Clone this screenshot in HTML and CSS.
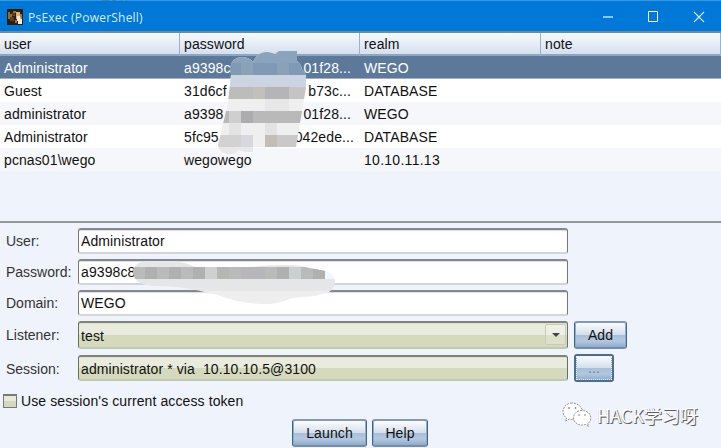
FILE: index.html
```html
<!DOCTYPE html>
<html lang="en"><head><meta charset="utf-8"><title>PsExec (PowerShell)</title>
<link rel="stylesheet" href="styles.css"></head>
<body>
<div class="window">
  <header class="titlebar">
    <svg class="app-icon" width="16" height="16" viewBox="0 0 16 16" shape-rendering="crispEdges"><path fill="#2a1d12" d="M0 0h16v16H0z"/><path fill="#9a6a25" d="M1 3h2v2h2v3H3v2H1zM6 2h3v2H6z"/><path fill="#5a421c" d="M3 8h4v4H3zM5 4h3v3H5z"/><path fill="#d9b36e" d="M9 3h4v2h2v5H9z"/><path fill="#f1ece3" d="M10 7h3v3h2v5h-4v-3h-1z"/><path fill="#c06a2c" d="M13 5h2v5h-1V8h-1zM8 11h2v3H8z"/></svg>
    <span class="title">PsExec (PowerShell)</span>
    <svg class="controls" width="106" height="12" viewBox="0 0 106 12" fill="none"><path d="M0 6h10" stroke="#8ec5f3" stroke-width="2"/><path d="M45.500.5h9v10h-9z" stroke="#fff"/><path d="M91 1l10 10M101 1L91 11" stroke="#d7ebfc" stroke-width="1.1"/></svg>
  </header>
  <main class="table">
    <div class="row head"><span>user</span><span>password</span><span>realm</span><span>note</span></div>
    <div class="row selected"><span>Administrator</span><span class="hash"><i>a9398c</i><i>01f28...</i></span><span>WEGO</span><span></span></div>
    <div class="row"><span>Guest</span><span class="hash"><i>31d6cf</i><i>b73c...</i></span><span>DATABASE</span><span></span></div>
    <div class="row alt"><span>administrator</span><span class="hash"><i>a9398</i><i>01f28...</i></span><span>WEGO</span><span></span></div>
    <div class="row"><span>Administrator</span><span class="hash wide"><i>5fc95</i><i>042ede...</i></span><span>DATABASE</span><span></span></div>
    <div class="row alt"><span>pcnas01\wego</span><span>wegowego</span><span class="number">10.10.11.13</span><span></span></div>
    <svg class="smudge-table" width="92" height="106" viewBox="216 50 92 106">
      <defs><clipPath id="a"><path d="M230 68q2-11 12-11 7 0 11 5 5-11 15-10l8 2v-1l3-2h18v10q4 3 5 8l4 6v12l-4 24-6 36h-43v5h-8l-6-2q-4 5-12 4-8-2-9-9l10-42 3-28z"/></clipPath></defs>
      <g clip-path="url(#a)" shape-rendering="crispEdges"><path fill="#efeff0" d="M216 50h92v106h-92z"/><path fill="#8ba4bd" d="M216 50h92v13h-92z"/><path fill="#8099b4" d="M216 63h92v12h-92z"/><path fill="#8aa1b8" d="M241 63h12v12h-12zM277 63h12v12h-12z"/><path fill="#cbd5e1" d="M216 75h92v12h-92z"/><path fill="#bcbcba" d="M216 87h37v12h-37z"/><path fill="#c3bfba" d="M253 87h12v12h-12z"/><path fill="#b5b4b6" d="M265 87h24v12h-24z"/><path fill="#c5c3c3" d="M289 87h19v12h-19z"/><path fill="#e7e7e8" d="M265 99h24v12h-24z"/><path fill="#b9b9ba" d="M216 111h92v12h-92z"/><path fill="#d0cfd0" d="M229 111h12v12h-12z"/><path fill="#acabad" d="M241 111h12v12h-12z"/><path fill="#e3e3e4" d="M229 123h12v12h-12zM265 123h12v12h-12z"/><path fill="#d3d2d2" d="M216 135h25v12h-25z"/><path fill="#d5d8df" d="M241 135h12v12h-12z"/><path fill="#c3bdb8" d="M265 135h12v12h-12z"/><path fill="#cac8c8" d="M277 135h31v12h-31z"/><path fill="#e8e8e9" d="M216 147h37v9h-37z"/></g></svg>
  </main>
  <form class="form">
    <div class="line"><label>User:</label><div class="field">Administrator</div></div>
    <div class="line"><label>Password:</label><div class="field">a9398c8</div></div>
    <div class="line"><label>Domain:</label><div class="field">WEGO</div></div>
    <div class="line tall"><label>Listener:</label><div class="field green combo">test<span class="drop"><svg width="8" height="4"><path d="M0 0h8L4 4z" fill="#44473f"/></svg></span></div><button type="button" class="add">Add</button></div>
    <div class="line session"><label>Session:</label><div class="field green">administrator * via&nbsp; 10.10.10.5@3100</div><button type="button" class="more"><span>...</span></button></div>
    <div class="check"><span class="box"></span>Use session's current access token</div>
    <div class="actions"><button type="button" class="launch">Launch</button><button type="button" class="help">Help</button></div>
    <svg class="smudge-field" width="206" height="44" viewBox="132 260 206 44"><defs><clipPath id="b"><path d="M133 270q2-8 14-9h26q12 1 22 6l58 0q14-2 30-2 18 0 26 3l16 3q8 3 10 9 0 8-6 12l-14 4-22 2q-15 6-26 6-28 0-49-9l-22-5q-18-4-40-4-20-1-22-10-1-3-1-6z"/></clipPath></defs><g clip-path="url(#b)" shape-rendering="crispEdges"><path fill="#e5e6e8" d="M132 260h206v31H132z"/><path fill="#f0f7ff" d="M325 265h13v14h-13z"/><path fill="#eeeeef" d="M132 291h206v13H132z"/><path fill="#bababa" d="M132 267h193v12H132z"/><path fill="#b1b0b1" d="M145 267h12v12h-12zM169 267h12v12h-12zM193 267h12v12h-12zM277 267h12v12h-12zM313 267h12v12h-12z"/><path fill="#d0d0d1" d="M205 267h12v12h-12z"/><path fill="#b6b7b2" d="M217 267h12v12h-12z"/><path fill="#b9b6bb" d="M241 267h24v12h-24z"/><path fill="#cad0d2" d="M289 267h12v12h-12z"/></g></svg>
  </form>
  <div class="watermark"><svg width="30" height="26" viewBox="0 0 30 26"><g fill="#fff" stroke="#777" stroke-width=".8" stroke-dasharray="2 1"><path d="M10 1C5 1 1 5 1 9.500c0 3 1.500 5 3.500 6.500L3.500 19l4-2c6 2 13-1 13-7.500C20.500 5 15 1 10 1z"/><path d="M20 8.500c-5 0-8.500 3-8.500 7.500 0 5 6 8.500 12 6.500l3 2-.7-3c2-1.400 3-3.200 3-5.500 0-4.500-4-7.500-8.800-7.500z"/></g><g fill="#555"><circle cx="7" cy="6" r=".8"/><circle cx="13.500" cy="6" r=".8"/><circle cx="17" cy="13" r=".7"/><circle cx="23" cy="13" r=".7"/></g></svg><span>HACK学习呀</span></div>
</div>
</body></html>
```
FILE: styles.css
```css
* { box-sizing: border-box; }
body { margin: 0; }
.window { position: relative; width: 721px; height: 448px; overflow: hidden; background: #eff3fb; font: 14px/20px "Liberation Sans", Arial, sans-serif; letter-spacing: .1px; color: #111; }
.titlebar { height: 33px; display: flex; align-items: center; padding: 1px 16px 0 7px; background: linear-gradient(90deg, transparent 102px, #27405c 102px 109px, transparent 109px 112px, #27405c 112px 116px, transparent 116px 121px, #27405c 121px 122px, transparent 122px 126px, #27405c 126px 127px, transparent 127px) 0 0 / 100% 1px no-repeat border-box, #0078d7; border-top: 1px solid #72b7e980; border-bottom: 2px solid #6e8ba6; color: #d9edfc; }
.title { margin-left: 5px; padding-top: 2px; font: 12px/18px "Open Sans", "Noto Sans", sans-serif; letter-spacing: .22px; flex: 1; }
.controls { margin-right: -4px; }
.table { position: relative; height: 190px; border-bottom: 2px solid #94979c; }
.row { display: grid; grid-template-columns: 180px 180px 181px 180px; height: 23px; line-height: 25px; background: #fff; }
.row > span { padding-left: 4px; white-space: pre; }
.head { background: linear-gradient(#f7fafd, #d5e0ed); border-bottom: 2px solid #8ba7c1; line-height: 23px; }
.head > span { border-right: 1px solid #98b3ce; }
.selected { background: #5d7999; color: #fff; border-bottom: 1px solid #9db0c4; }
.alt { background: #f6f7fa; }
.row > .hash { display: flex; justify-content: space-between; padding-right: 9px; }
.row > .wide { padding-right: 6px; }
.row > .number { letter-spacing: .28px; }
.hash i { font-style: normal; }
.smudge-table { position: absolute; left: 216px; top: 17px; }
.form { position: relative; padding-top: 5px; }
.line { display: flex; height: 26px; margin-bottom: 5px; }
.line label { width: 72px; margin-left: 6px; line-height: 27px; letter-spacing: 0; color: #333; }
.field { width: 490px; height: 26px; padding-left: 2px; line-height: 23px; background: #fff; border: 1px solid #777; border-top: 2px solid #85878c; border-bottom: 2px solid #d3d5d8; border-radius: 3px; white-space: pre; box-shadow: inset 0 1px 1px #ddd; }
.green { background: linear-gradient(#e9ecdd 0 50%, #d5dabd 50%); border-color: #7f8474 #697060 #c3c8b6; }
.tall { height: 28px; margin-bottom: 6px; }
.tall .field { height: 28px; line-height: 26px; }
.tall label { line-height: 29px; }
.combo { display: flex; justify-content: space-between; }
.drop { width: 21px; height: 21px; margin: 1px 1px 0 0; border: 1px solid #c7cbb7; border-radius: 2px; display: grid; place-items: center; background: linear-gradient(#eef0e6 0 50%, #dde1ca 50%); }
button { font: inherit; letter-spacing: inherit; color: #111; padding: 0; border: 1px solid #406589; border-top: 2px solid #849ab3; border-bottom: 2px solid #728eac; border-radius: 3px; background: linear-gradient(#fbfcfe, #d4dfeb 49%, #a9bfd9 50%, #b2c8e1 75%, #8fabc9); box-shadow: inset 1px 0 #91adca, inset -1px 0 #91adca; }
.add { width: 53px; height: 28px; margin-left: 6px; }
.session { height: 27px; margin-bottom: 11px; }
.session label { line-height: 28px; }
.session .field { line-height: 24px; }
.more { width: 40px; height: 28px; margin: -1px 0 0 6px; border-width: 2px; border-color: #4d6d8f; outline: 1px dotted #e5edf6; outline-offset: -3px; color: #64809d; }
.check { display: flex; height: 16px; margin-left: 3px; align-items: center; }
.box { width: 14px; height: 14px; margin-right: 4px; border: 1px solid #777b70; border-top-width: 2px; background: linear-gradient(#e7eadb 50%, #d4d9bd 50%); }
.actions { display: flex; gap: 5px; margin: 10px 0 0 292px; }
.actions button { height: 28px; }
.launch { width: 75px; } .help { width: 56px; }
.smudge-field { position: absolute; left: 132px; top: 37px; }
.watermark { position: absolute; left: 562px; top: 401px; display: flex; align-items: center; gap: 5px; font: 18px/28px "Noto Sans CJK SC", sans-serif; letter-spacing: 0; color: #fff; text-shadow: 1px 1px #5c5c5c, 0 1px #8b8b8b; }
```
